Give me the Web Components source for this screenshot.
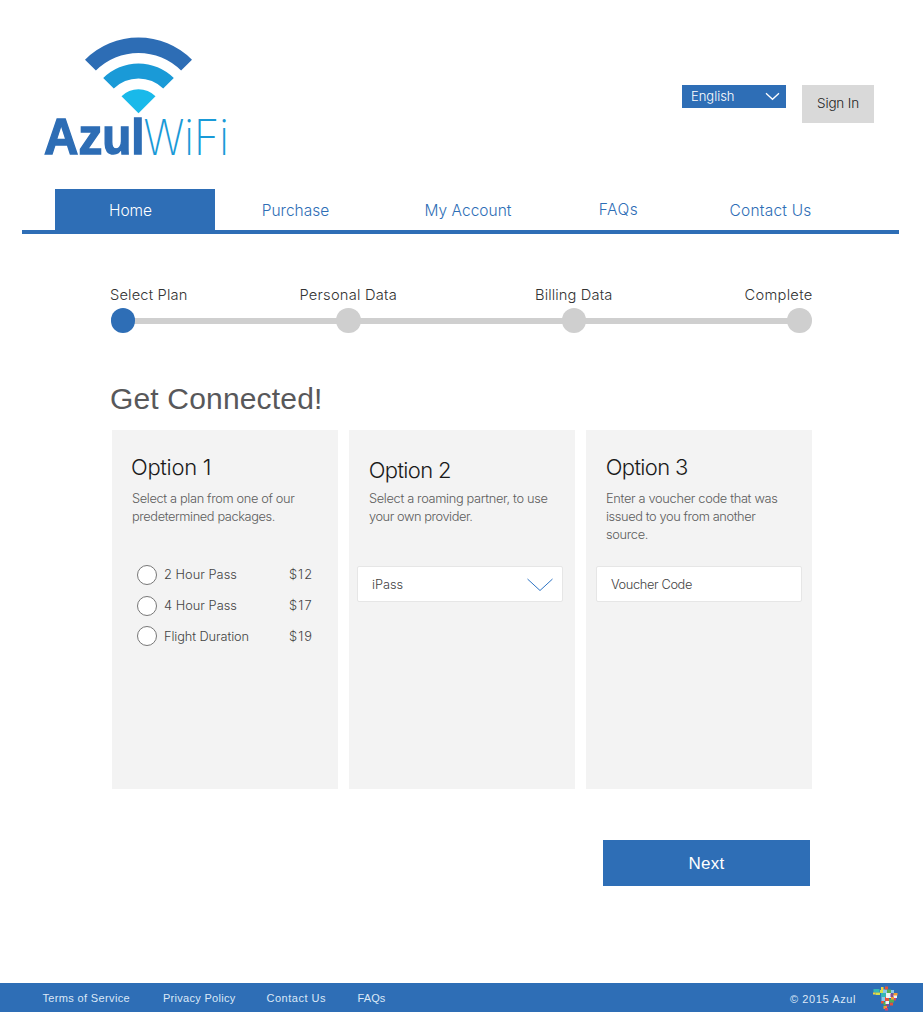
<!DOCTYPE html>
<html lang="en">
<head>
<meta charset="utf-8">
<title>Azul WiFi</title>
<style>
html,body{margin:0;padding:0;background:#fff}
body{font-family:Inter,"Liberation Sans",sans-serif;font-weight:300}
</style>
</head>
<body>
<azul-page></azul-page>
<script>
function define(name, html, ready) {
  const tpl = document.createElement('template');
  tpl.innerHTML = html;
  customElements.define(name, class extends HTMLElement {
    connectedCallback() {
      if (this.shadowRoot) return;
      this.attachShadow({mode: 'open'}).appendChild(tpl.content.cloneNode(true));
      if (ready) ready.call(this, this.shadowRoot);
    }
  });
}

/* One line of text, tracked so that it fills the width given in "w". */
define('fit-text', `<style>
:host{display:block;white-space:nowrap;width:max-content}
span{display:inline-block}
</style><span><slot></slot></span>`, function (root) {
  const span = root.querySelector('span');
  const w = parseFloat(this.getAttribute('w'));
  const n = this.textContent.length;
  const natural = span.getBoundingClientRect().width;
  span.style.letterSpacing = ((w - natural) / n).toFixed(3) + 'px';
});

define('azul-logo', `<style>:host{display:block;width:210px;height:150px}svg{display:block;overflow:visible}</style>
<svg width="210" height="150" viewBox="40 34 210 150">
<path fill="#2d6db5" d="M85 59.700A75.500 75.500 0 0 1 192 59.700L181.100 70.600A60.300 60.300 0 0 0 95.900 70.600Z"/>
<path fill="#1a9ad7" d="M103.200 78A50 50 0 0 1 173.800 78L163.200 88.600A35 35 0 0 0 113.800 88.600Z"/>
<path fill="#19b9ea" d="M121.500 96.200A24 24 0 0 1 155.500 96.200L138.500 113.200Z"/>
<text x="44" y="154.300" font-family="Liberation Sans,Arial,sans-serif" font-weight="700" font-size="49.500" textLength="100.500" lengthAdjust="spacingAndGlyphs" fill="#2d6db5" stroke="#2d6db5" stroke-width="1.400">Azul</text>
<text x="143.500" y="154.500" font-family="Inter,sans-serif" font-weight="200" font-size="48.500" textLength="85.500" lengthAdjust="spacingAndGlyphs" fill="#1a9ad7">WiFi</text>
</svg>`);

define('lang-select', `<style>
:host{display:flex;box-sizing:border-box;width:104px;height:23px;background:#2e6eb6;color:#fff;padding:0 6px 0 9px;justify-content:space-between;align-items:center;font-size:13px;line-height:23px}
</style><fit-text w="43.5">English</fit-text>
<svg width="15" height="9" viewBox="0 0 15 9" fill="none" stroke="#fff" stroke-width="1.300"><path d="M1 1.300L7.500 7.300L14 1.300"/></svg>`);

define('sign-in', `<style>
:host{display:flex;width:72px;height:38px;background:#d9d9d9;color:#222;justify-content:center;font-size:13.500px;line-height:37px}
</style><fit-text w="42">Sign In</fit-text>`);

define('site-header', `<style>
:host{display:flex;height:189px;box-sizing:border-box;padding:34px 49px 0 40px;align-items:flex-start}
lang-select{margin:51px 16px 0 auto}
sign-in{margin-top:51px}
</style><azul-logo></azul-logo><lang-select></lang-select><sign-in></sign-in>`);

define('nav-tab', `<style>
:host{display:flex;justify-content:center;height:41px;line-height:44px;font-size:15.500px;color:#2e6eb6}
:host([active]){background:#2e6eb6;color:#fff}
</style><slot></slot>`);

define('site-nav', `<style>
:host{display:grid;grid-template-columns:160px 161px 184px 117px 187px;margin:0 24px 0 22px;padding-left:33px;border-bottom:4px solid #2e6eb6;height:41px}
.up{line-height:42px}
nav-tab[active] fit-text{margin-right:9px}
</style>
<nav-tab active><fit-text w="43">Home</fit-text></nav-tab>
<nav-tab><fit-text w="67.5">Purchase</fit-text></nav-tab>
<nav-tab><fit-text w="87">My Account</fit-text></nav-tab>
<nav-tab class="up"><fit-text w="39.5">FAQs</fit-text></nav-tab>
<nav-tab><fit-text w="82">Contact Us</fit-text></nav-tab>`);

define('step-bar', `<style>
:host{display:block;margin:51px 111px 0 110px;color:#333}
.labels{display:flex;font-size:14.700px;line-height:20px;height:23px}
.labels fit-text:nth-child(2){margin-left:112px}
.labels fit-text:nth-child(3){margin-left:138px}
.labels fit-text:nth-child(4){margin-left:auto;margin-right:-.5px}
.track{display:flex;justify-content:space-between;margin:0 .5px 0 .7px;height:25px;background:linear-gradient(#cfcfcf,#cfcfcf) center/calc(100% - 10px) 6px no-repeat}
i{width:24.500px;height:24.500px;border-radius:50%;background:#cfcfcf}
i:first-child{background:#2e6eb6}
</style>
<div class="labels"><fit-text w="77.5">Select Plan</fit-text><fit-text w="97.5">Personal Data</fit-text><fit-text w="77.5">Billing Data</fit-text><fit-text w="68">Complete</fit-text></div>
<div class="track"><i></i><i></i><i></i><i></i></div>`);

define('plan-card', `<style>
:host{display:flex;flex-direction:column;box-sizing:border-box;width:226px;height:359px;background:#f3f3f3;padding:21px 9px 0;color:#5c5c5c}
.head{color:#1a1a1a;font-size:22px;line-height:32px;height:39px;margin-left:10px}
:host([low]) .head{padding-top:3px;height:36px}
.desc{font-size:12.800px;line-height:18px;height:76px;margin-left:11px}
</style><div class="head"><slot name="head"></slot></div><div class="desc"><slot name="desc"></slot></div><slot></slot>`);

define('plan-radio', `<style>
:host{display:flex;height:31px;font-size:12.800px;line-height:20px;margin:0 16px 0 16px;color:#444;font-weight:300}
i{box-sizing:border-box;width:20px;height:20px;border:1px solid #777;border-radius:50%;background:#fff;margin-right:7px}
:host(:last-child) i{margin-top:-1px}
div{margin-left:auto;width:24px}
</style><i></i><slot></slot><div><slot name="price"></slot></div>`);

define('field-box', `<style>
:host{display:flex;justify-content:space-between;align-items:center;box-sizing:border-box;width:206px;height:36px;border:1px solid #e6e6e6;border-radius:2px;background:#fff;color:#444;padding:2px 9px 0 14px;font-size:12.800px;line-height:32px}
</style><slot></slot>`);

define('next-button', `<style>
:host{display:flex;justify-content:center;width:207px;height:46px;margin:51px 113px 0 auto;background:#2e6eb6;color:#fff;font:400 17px/48px "Liberation Sans",Arial,sans-serif}
</style><fit-text w="36">Next</fit-text>`);

define('site-footer', `<style>
:host{display:flex;box-sizing:border-box;height:29px;margin-top:97px;background:#2e6eb6;color:#dce8f6;padding:0 24px 0 42.500px;font:400 11px/30px "Liberation Sans",Arial,sans-serif}
fit-text+fit-text{margin-left:33px}
fit-text:nth-of-type(3){margin-left:31px}
fit-text:nth-of-type(4){margin-left:31.500px}
fit-text.copy{margin-left:auto;line-height:32px}
svg{margin:2px 0 0 16px}
</style>
<fit-text w="87.5">Terms of Service</fit-text><fit-text w="72.5">Privacy Policy</fit-text><fit-text w="59.5">Contact Us</fit-text><fit-text w="28">FAQs</fit-text>
<fit-text class="copy" w="66">© 2015 Azul</fit-text>
<svg width="27" height="27" viewBox="0 0 27 27">
<path fill="#35b7b5" d="M1.500 4h6v3.500h-6zM9 8h5v4h-5z"/><path fill="#d6df4b" d="M8 5h3v3h-3zM3.500 7.500h4.500v2.500h-4.500z"/>
<path fill="#8bc9ec" d="M11 4.500h4v3.500h-4zM19 5h3v3h-3zM9.500 12h3.500v4h-3.500z"/><path fill="#f2d43c" d="M1 7.500h2.500v2h-2.500zM9 2h2.500v3h-2.500z"/>
<path fill="#e4523b" d="M13 1.500h3v3h-3zM13 12h4v4h-4zM18 17.500h3v3h-3zM9 16h3v2.500h-3z"/>
<path fill="#57ae52" d="M15 4.500h4v4h-4zM17 14h5v3.500h-5zM11.500 17h2.500v3.500h-2.500z"/>
<path fill="#eef3f5" d="M14 8h5v5h-5zM21 10h4v3h-4zM13.500 16h3.500v3h-3.500z"/>
<path fill="#8a4d8f" d="M18.500 8.500h3v3.500h-3zM14 19h3v3h-3z"/><path fill="#f39b32" d="M21.500 8h4v2.500h-4zM19 12h3v2.500h-3zM11.500 21h3.500v3h-3.500z"/>
<path fill="#d94269" d="M13 23h3v2.500h-3zM22 13h2v2.500h-2z"/>
</svg>`);

define('azul-page', `<style>
:host{display:block;width:923px;height:1012px;overflow:hidden;background:#fff}
h1{margin:48px 0 0 110px;height:49px;color:#58585a;font:400 30px/36px "Liberation Sans",Arial,sans-serif}
.cards{display:flex;gap:11px;margin-left:112px}
plan-radio:first-of-type{margin-top:-1px}
.p{margin-left:-1px}
.v{margin-left:1px}
.r{margin-left:.8px}
</style>
<site-header></site-header>
<site-nav></site-nav>
<step-bar></step-bar>
<h1><fit-text w="212.5">Get Connected!</fit-text></h1>
<div class="cards">
<plan-card>
<fit-text slot="head" w="80">Option 1</fit-text>
<fit-text slot="desc" w="162.5">Select a plan from one of our</fit-text>
<fit-text slot="desc" w="143">predetermined packages.</fit-text>
<plan-radio><fit-text w="73">2 Hour Pass</fit-text><fit-text slot="price" w="24">$12</fit-text></plan-radio>
<plan-radio><fit-text w="73">4 Hour Pass</fit-text><fit-text slot="price" w="24">$17</fit-text></plan-radio>
<plan-radio><fit-text w="85">Flight Duration</fit-text><fit-text slot="price" w="24">$19</fit-text></plan-radio>
</plan-card>
<plan-card low>
<fit-text slot="head" w="82" class="r">Option 2</fit-text>
<fit-text slot="desc" w="178.5">Select a roaming partner, to use</fit-text>
<fit-text slot="desc" w="103.5">your own provider.</fit-text>
<field-box class="p"><fit-text w="31">iPass</fit-text><svg width="26" height="14" viewBox="0 0 26 14" fill="none" stroke="#2e74c4"><path d="M.5 1L13 12.500L25.500 1"/></svg></field-box>
</plan-card>
<plan-card>
<fit-text slot="head" w="82" class="r">Option 3</fit-text>
<fit-text slot="desc" w="171.5">Enter a voucher code that was</fit-text>
<fit-text slot="desc" w="149.5">issued to you from another</fit-text>
<fit-text slot="desc" w="42">source.</fit-text>
<field-box class="v"><fit-text w="81">Voucher Code</fit-text></field-box>
</plan-card>
</div>
<next-button></next-button>
<site-footer></site-footer>`);
</script>
</body>
</html>
